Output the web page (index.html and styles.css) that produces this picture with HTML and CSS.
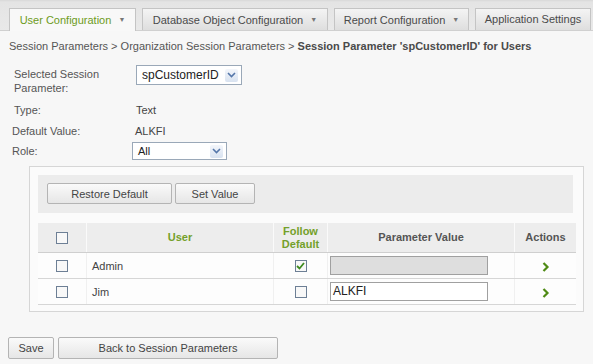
FILE: index.html
```html
<!DOCTYPE html>
<html lang="en">
<head>
    <meta charset="UTF-8">
    <title>Session Parameter for Users</title>
    <link rel="stylesheet" href="styles.css">
</head>
<body>
    <div class="tabbar">
        <div class="tab active">User Configuration <span class="caret">&#9660;</span></div>
        <div class="tab tab-db">Database Object Configuration <span class="caret">&#9660;</span></div>
        <div class="tab tab-report">Report Configuration <span class="caret">&#9660;</span></div>
        <div class="tab tab-app">Application Settings</div>
    </div>

    <div class="breadcrumb">
        Session Parameters &gt; Organization Session Parameters &gt; <b>Session Parameter 'spCustomerID' for Users</b>
    </div>

    <div class="form">
        <div class="label label-param">Selected Session<br>Parameter:</div>
        <div class="value">
            <div class="select select-param">spCustomerID <span class="arrow"><svg width="9" height="6" viewBox="0 0 9 6"><path d="M1 1 L4.5 4.5 L8 1" fill="none" stroke="#5577aa" stroke-width="1.6"/></svg></span></div>
        </div>
        <div class="label label-type">Type:</div>
        <div class="value value-type">Text</div>
        <div class="label label-default">Default Value:</div>
        <div class="value value-default">ALKFI</div>
        <div class="label label-role">Role:</div>
        <div class="value">
            <div class="select select-role">All <span class="arrow"><svg width="9" height="6" viewBox="0 0 9 6"><path d="M1 1 L4.5 4.5 L8 1" fill="none" stroke="#5577aa" stroke-width="1.6"/></svg></span></div>
        </div>
    </div>

    <div class="panel">
        <div class="toolbar">
            <button class="btn btn-restore">Restore Default</button>
            <button class="btn btn-set">Set Value</button>
        </div>
        <table class="grid">
            <tr>
                <th class="col-check"><span class="box"></span></th>
                <th class="col-user green">User</th>
                <th class="col-follow green">Follow<br>Default</th>
                <th class="col-value">Parameter Value</th>
                <th class="col-actions">Actions</th>
            </tr>
            <tr>
                <td class="col-check"><span class="box"></span></td>
                <td class="col-user">Admin</td>
                <td class="col-follow"><span class="box checked"><svg width="9" height="8" viewBox="0 0 9 8"><path d="M1 4 L3.5 6.5 L8 1" fill="none" stroke="#3d8a1e" stroke-width="1.8"/></svg></span></td>
                <td class="col-value"><div class="input disabled"></div></td>
                <td class="col-actions"><svg width="8" height="10" viewBox="0 0 8 10"><path d="M1.5 1 L5.5 5 L1.5 9" fill="none" stroke="#4e8a14" stroke-width="2.2"/></svg></td>
            </tr>
            <tr>
                <td class="col-check"><span class="box"></span></td>
                <td class="col-user">Jim</td>
                <td class="col-follow"><span class="box"></span></td>
                <td class="col-value"><div class="input">ALKFI</div></td>
                <td class="col-actions"><svg width="8" height="10" viewBox="0 0 8 10"><path d="M1.5 1 L5.5 5 L1.5 9" fill="none" stroke="#4e8a14" stroke-width="2.2"/></svg></td>
            </tr>
        </table>
    </div>

    <div class="footer">
        <button class="btn btn-save">Save</button>
        <button class="btn btn-back">Back to Session Parameters</button>
    </div>
</body>
</html>
```

FILE: styles.css
```css
body {
    font-family: "Liberation Sans", Arial, sans-serif;
    font-size: 11px;
    color: #444;
    background-color: #f7f7f7;
    margin: 0;
    width: 593px;
    height: 364px;
    overflow: hidden;
}
.tabbar {
    display: flex;
    gap: 6px;
    height: 22px;
    padding: 8px 0 0 9px;
    background: linear-gradient(#d8d8d8, #e4e4e4 2px, #e9e9e9);
    border-bottom: 1px solid #d0d0d0;
}
.tab {
    box-sizing: border-box;
    height: 22px;
    line-height: 21px;
    text-align: center;
    color: #4a4a4a;
    background: linear-gradient(#f4f4f4, #dedede);
    border: 1px solid #c4c4c4;
    border-bottom: none;
    white-space: nowrap;
}
.tab.active {
    width: 127px;
    height: 23px;
    color: #6d9b22;
    background: #f8f8f8;
}
.tab-db { width: 186px; }
.tab-report { width: 135px; }
.tab-app { width: 116px; }
.caret {
    font-size: 7px;
    color: #777;
    vertical-align: 2px;
    margin-left: 4px;
}
.breadcrumb {
    padding: 9px 0 0 9px;
    color: #555;
    height: 20px;
}
.breadcrumb b {
    color: #4a4a4a;
}
.form {
    display: grid;
    grid-template-columns: 122px 200px;
    padding: 5px 0 0 12px;
    color: #555;
}
.label, .value {
    line-height: 14px;
}
.label-param {
    padding: 2px 0 0 2px;
    height: 34px;
}
.value {
    padding-left: 2px;
}
.select {
    box-sizing: border-box;
    display: flex;
    align-items: center;
    justify-content: space-between;
    height: 20px;
    border: 1px solid #9aa8b8;
    background: #fff;
    color: #222;
    padding: 0 3px 0 5px;
    font-size: 12px;
}
.select-param {
    width: 106px;
}
.select-role {
    width: 95px;
    height: 18px;
    margin-left: -4px;
    font-size: 11px;
}
.arrow {
    display: flex;
    align-items: center;
    justify-content: center;
    width: 13px;
    height: 13px;
    background: linear-gradient(#f3f6fb, #d8e2f0);
    border-radius: 2px;
}
.label-type, .value-type {
    padding-top: 2px;
    height: 18px;
    padding-left: 2px;
}
.value-type { color: #444; }
.label-default, .value-default {
    padding-top: 3px;
    height: 18px;
}
.value-default { margin-left: -1px; color: #444; }
.label-role {
    padding-top: 2px;
}
.panel {
    box-sizing: border-box;
    width: 555px;
    margin: 6px 0 0 29px;
    padding: 8px 10px 6px 8px;
    background: #fbfbfb;
    border: 1px solid #d6d6d6;
}
.toolbar {
    display: flex;
    gap: 3px;
    height: 38px;
    box-sizing: border-box;
    padding: 8px 0 0 9px;
    background: #ececec;
    margin-bottom: 10px;
}
.btn {
    font-family: "Liberation Sans", Arial, sans-serif;
    font-size: 11px;
    color: #444;
    height: 21px;
    padding: 0;
    background: linear-gradient(#fafafa, #e6e6e6);
    border: 1px solid #b4b4b4;
    border-radius: 2px;
}
.btn-restore { width: 125px; }
.btn-set { width: 80px; }
.grid {
    width: 534px;
    border-collapse: collapse;
    table-layout: fixed;
}
.grid th {
    height: 29px;
    background: #ededed;
    color: #555;
    font-weight: bold;
    line-height: 13px;
    border-left: 1px solid #fafafa;
    border-bottom: 1px solid #cfcfcf;
    padding: 0;
}
.grid th.green {
    color: #74a02a;
}
.grid td {
    height: 25px;
    padding: 0;
    border-left: 1px solid #f0f0f0;
    border-bottom: 1px solid #d6d6d6;
    background: #fdfdfd;
    color: #444;
}
.grid th:first-child, .grid td:first-child { border-left: none; }
.col-check { width: 48px; text-align: center; }
.col-user { width: 186px; }
td.col-user { padding-left: 5px !important; }
.col-follow { width: 53px; text-align: center; }
.col-value { width: 186px; }
.col-actions { width: 61px; text-align: center; }
.box {
    box-sizing: border-box;
    display: inline-flex;
    align-items: center;
    justify-content: center;
    width: 12px;
    height: 12px;
    border: 1px solid #6d7f95;
    background: #f8f8f8;
    vertical-align: middle;
}
.input {
    box-sizing: border-box;
    width: 158px;
    height: 19px;
    margin-left: 2px;
    border: 1px solid #a0a0a0;
    background: #fff;
    color: #222;
    line-height: 17px;
    padding-left: 2px;
    font-size: 12px;
}
.input.disabled {
    background: #dedede;
}
.grid td svg {
    vertical-align: middle;
}
.footer {
    display: flex;
    gap: 4px;
    padding: 25px 0 0 8px;
}
.btn-save { width: 46px; height: 22px; }
.btn-back { width: 220px; height: 22px; }
```
